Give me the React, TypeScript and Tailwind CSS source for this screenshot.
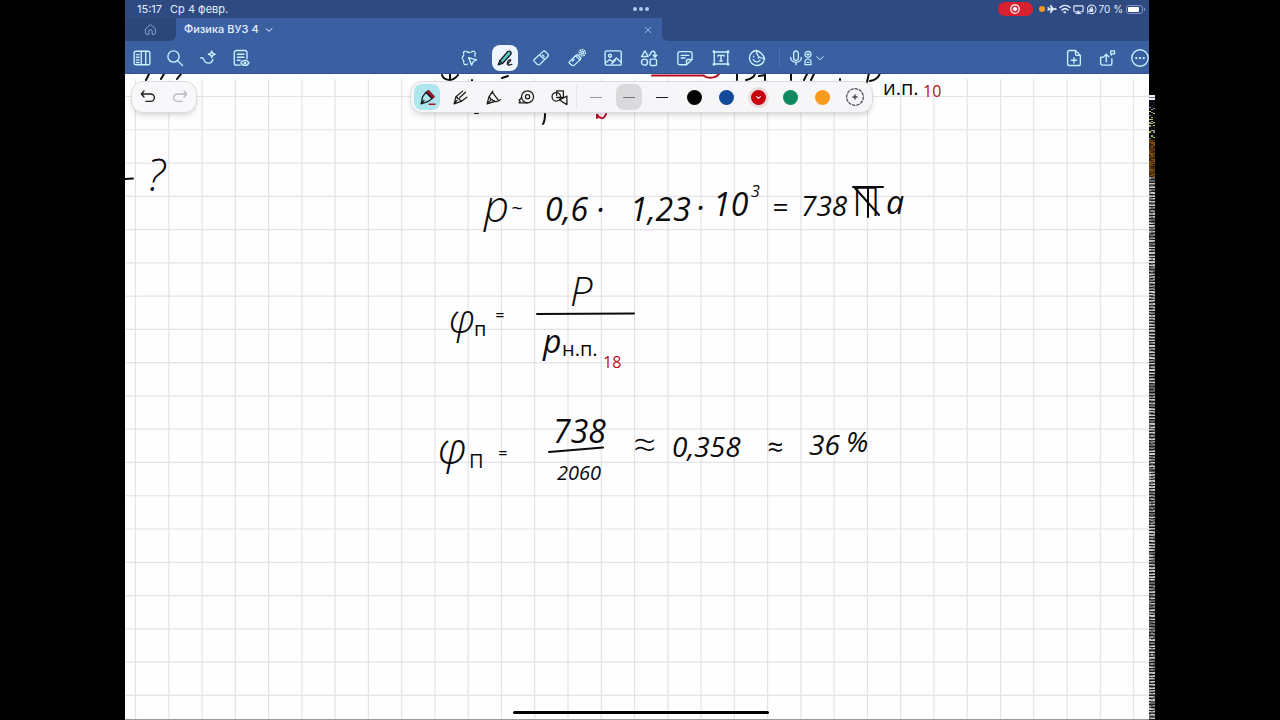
import type { ReactNode } from 'react'

const icon = {
  viewBox: '0 0 24 24',
  fill: 'none',
  stroke: 'currentColor',
  strokeWidth: 1.8,
  strokeLinecap: 'round',
  strokeLinejoin: 'round',
  'aria-hidden': true,
} as const

function Icon({ children, className = 'size-[18px]' }: { children: ReactNode; className?: string }) {
  return (
    <svg {...icon} className={`shrink-0 ${className}`}>
      {children}
    </svg>
  )
}

const leftTools = [
  {
    label: 'Боковая панель',
    art: (
      <>
        <rect x="1.500" y="3" width="21" height="18" rx="2.500" />
        <path d="M11 3v18M17 3v18M4.500 7.500H8M4.500 11H8M4.500 14.500H8M4.500 18H8" />
      </>
    ),
  },
  {
    label: 'Поиск',
    art: (
      <>
        <circle cx="10" cy="10" r="7.500" />
        <path d="M15.500 15.500l6.500 6.500" />
      </>
    ),
  },
  {
    label: 'Ассистент',
    art: (
      <>
        <path d="M2 12c2-1 3.500 0 4.500 2 2.500 7 10.500 6 12 0" />
        <path d="M17 2.500l1.200 3.300 3.300 1.200-3.300 1.200L17 11.500l-1.200-3.300L12.500 7l3.300-1.200z" />
      </>
    ),
  },
  {
    label: 'Режим чтения',
    art: (
      <>
        <path d="M11 21.500H6a3 3 0 0 1-3-3V5a3 3 0 0 1 3-3h11a3 3 0 0 1 3 3v8M7 7h9M7 11h9M7 15h4" />
        <path d="M12 18.500c2-4.500 8.500-4.500 10.500 0-2 4.500-8.500 4.500-10.500 0z" />
        <circle cx="17.300" cy="18.500" r="1" />
      </>
    ),
  },
]

const midTools = [
  {
    label: 'Лассо',
    art: (
      <>
        <path
          strokeDasharray="4.500 2"
          d="M10 20c-3 2-6 0-5-3 .5-2-2-3-2-5s2.500-3 2-5C4 3 7 2 9 3.500s5 1.500 7 0 5.500 0 4 3.500c-.5 1.500 0 2 .5 3"
        />
        <path d="M11.500 11.500l10.500 3-4.500 2.500-2 4.500z" />
      </>
    ),
  },
  {
    label: 'Перо',
    art: (
      <>
        <path fill="#58c4bb" d="M5 16L15.500 3.500c3-2 6 1 4 4L9 19l-6 2z" />
        <path d="M5 16l3.500 3M15 20c6-5 5-6 3-5.500-3 1-4 7-1 7 2 0 3-1.500 4-1" />
      </>
    ),
  },
  {
    label: 'Ластик',
    art: (
      <>
        <path d="M3 14L14.500 3.500c1-1 2.500-1 3.500 0l3 3c1 1 1 2.500 0 3.500L10.500 20.500c-1 1-2.500 1-3.500 0l-4-4c-.7-.7-.7-1.800 0-2.500zM10 8l7 6" />
        <path d="M14 8l2 2" />
      </>
    ),
  },
  {
    label: 'Маркер',
    art: (
      <>
        <path d="M2 17L10 9l6 5.500-7.500 7c-1 1-2.500 1-3.500 0l-3-2.500c-.6-.6-.6-1.400 0-2z" />
        <path d="M10 9l2.500-1.500 4.500 4.500-1 2.500M8 14l-2 2" />
        <circle cx="19" cy="5" r="1.800" />
        <path strokeDasharray="1 2.200" d="M19 .8a4.200 4.200 0 1 1 0 8.400 4.200 4.200 0 0 1 0-8.400" />
      </>
    ),
  },
  {
    label: 'Изображение',
    art: (
      <>
        <rect x="1.500" y="2.500" width="21.500" height="19" rx="2" />
        <circle cx="8" cy="9" r="2" />
        <path d="M2.500 18l5-4 4 3 5-5 5.500 5M10 20l5-5" />
      </>
    ),
  },
  {
    label: 'Элементы',
    art: (
      <>
        <path d="M6.500 2.500L11 10H2zM14 6c1-4 6-4 6 0v4M17.500 8l2.500 3 2.500-3M14 6l-1.500 2.500" />
        <circle cx="6" cy="17.500" r="4" />
        <rect x="13.500" y="13.500" width="8.500" height="8.500" rx="1.500" />
      </>
    ),
  },
  {
    label: 'Заметка',
    art: <path d="M14 21H5a2.500 2.500 0 0 1-2.500-2.500V6A2.500 2.500 0 0 1 5 3.500h14A2.500 2.500 0 0 1 21.500 6v8L14 21v-5a2 2 0 0 1 2-2h5.500M7 8.500h10M7 12h5" />,
  },
  {
    label: 'Текст',
    art: (
      <>
        <path d="M3 4h18v16H3z" />
        <path d="M8 9.500v-1h8v1M12 8.500V16M10.500 16h3" />
        <path strokeWidth={3.500} d="M2.500 3.500h.1M21.400 3.500h.1M2.500 20.500h.1M21.400 20.500h.1" />
      </>
    ),
  },
  {
    label: 'Стикер',
    art: (
      <>
        <path d="M11 2a10 10 0 1 0 11 11c-1-5-6-10-11-11z" />
        <path d="M11 2c1 5 1 10 11 11M7 14c2 4 7 4 9 1M7.500 9.500v.8M14 12v.3" />
      </>
    ),
  },
]

const pens = [
  {
    label: 'Перьевая ручка',
    art: (
      <>
        <path fill="#a5162c" stroke="#7d1427" d="M10 4.500l3.500-2.500 8 9-3 2.500z" />
        <path d="M10 4.500l8.500 9-5.500 4L3 21l2-10zM3 21l4-5" />
        <path stroke="#a5162c" strokeWidth={2.200} d="M14.500 21.500h8" />
      </>
    ),
  },
  {
    label: 'Шариковая ручка',
    art: <path d="M15 3L5.500 11 3 21l10-3.500 8-6M3 21l4-5M5.500 11c1.500 0 2.500 1 2.300 2.500 2-.3 3 .5 2.700 2 1.500 0 2.500.5 2.500 2M11 12l8-7.500" />,
  },
  {
    label: 'Кисть',
    art: <path d="M11 3l-5.500 8L3 21l11-3.500M10 4l9 12M14 17.500c3 1 5 0 8-2.500M3 21l5-5M5.500 11c2 .5 2.500 2 2 3.500 2-.2 3.500.5 3.500 2 1.500-.3 2.500 0 3 1" />,
  },
  {
    label: 'Лента',
    art: (
      <>
        <circle cx="13.500" cy="11" r="8.500" />
        <circle cx="13.500" cy="11" r="3" />
        <path d="M13.500 19.500H1.500l1.500-2-1.500-2 2-1.500 1.500-2" />
      </>
    ),
  },
  {
    label: 'Фигуры',
    art: (
      <>
        <circle cx="7.500" cy="11" r="6" />
        <path d="M8 9V2.500h9.500V12H8M12 15.500L22.500 10v12z" />
      </>
    ),
  },
]

const swatches = [
  { label: 'Чёрный', className: 'bg-black' },
  { label: 'Синий', className: 'bg-[#104a98]' },
  { label: 'Красный', className: 'bg-[#c8000d]', active: true },
  { label: 'Зелёный', className: 'bg-[#0f8a60]' },
  { label: 'Оранжевый', className: 'bg-[#f79a1e]' },
]

const widths = [
  { label: 'Тонкая линия', className: 'h-px w-3 bg-[#9b9ba0]' },
  { label: 'Средняя линия', className: 'h-px w-3 bg-[#77777c]', active: true },
  { label: 'Толстая линия', className: 'h-px w-3 bg-[#1c1c1e]' },
]

type Note = [x: number, baseline: number, size: number, text: string]

// handwriting on the page: slanted strokes, then the upright subscripts and units
const slanted: Note[] = [
  [147, 191, 44, '?'],
  [484, 222, 44, 'р'],
  [511, 215, 20, '~'],
  [545, 221, 32, '0,6'],
  [596, 221, 32, '·'],
  [630, 221, 32, '1,23'],
  [696, 219, 32, '·'],
  [713, 216, 32, '10'],
  [751, 197, 16, '3'],
  [772, 217, 28, '='],
  [801, 216, 28, '738'],
  [886, 214, 32, 'а'],
  [449, 333, 40, 'φ'],
  [495, 321, 16, '='],
  [570, 306, 40, 'Р'],
  [543, 353, 32, 'р'],
  [438, 464, 44, 'φ'],
  [498, 459, 16, '='],
  [553, 443, 32, '738'],
  [557, 480, 20, '2060'],
  [633, 459, 40, '≈'],
  [672, 457, 28, '0,358'],
  [767, 457, 28, '≈'],
  [809, 455, 28, '36'],
  [846, 452, 28, '%'],
]

const upright: Note[] = [
  [883, 95, 20, 'и.п.'],
  [852, 216, 40, 'П'],
  [474, 336, 20, 'п'],
  [562, 356, 20, 'н.п.'],
  [469, 468, 20, 'П'],
]

const red: Note[] = [
  [923, 97, 16, '10'],
  [603, 368, 16, '18'],
]

function Notes({ items }: { items: Note[] }) {
  return items.map(([x, y, size, text]) => (
    <text key={`${x}-${y}`} x={x} y={y} fontSize={size} className={size < 40 ? 'font-normal' : 'font-light'}>
      {text}
    </text>
  ))
}

const STEP = 33.27
const columns = Array.from({ length: 31 }, (_, i) => 135.5 + i * STEP)
const rows = Array.from({ length: 19 }, (_, i) => 96.5 + i * STEP)

function Page() {
  return (
    <svg
      className="absolute inset-0 size-full font-['Open_Sans','Noto_Sans',sans-serif]"
      role="img"
      aria-label="Страница тетради"
    >
      <g transform="translate(-125 -74)">
        <g stroke="#e3e3e8" strokeWidth="1.200">
          {columns.map((x) => (
            <line key={x} x1={x} x2={x} y1="79" y2="720" />
          ))}
          {rows.map((y) => (
            <line key={y} x1="125" x2="1149" y1={y} y2={y} />
          ))}
        </g>
        <g fill="none" stroke="#0b0b0d" strokeWidth="2" strokeLinecap="round">
          <path d="M125 179l8-.5M149 74l-3 6M164 74l-3 5M181 74l-4 5" />
          <path d="M442 75c2 6 11 7 16 0M450 79v-5M502 78l6-2M472 80v1M475 113h3" />
          <path d="M737 74v6M746 80c5-1 8-3 9-6M759 76l6-1v5M791 74v6M804 80l3-6M811 80l3-6M840 79v1" />
          <path d="M869 73l-2 9M870 81c6-1 9-4 10-8M545 114c0 4 0 7-2 10" />
          <path d="M537 314l97-.500M549 452l54-4.500" />
          <path d="M853 187h30M855 188l24 27M868 189v28" />
        </g>
        <g fill="none" stroke="#b80f20" strokeWidth="2" strokeLinecap="round">
          <path d="M652 75.500h52M704 76c5 3 12 2 15-2M597 118v-4c2 5 7 6 9 0" />
        </g>
        <g className="italic" fill="#0b0b0d">
          <Notes items={slanted} />
        </g>
        <g fill="#0b0b0d">
          <Notes items={upright} />
        </g>
        <g fill="#b80f20">
          <Notes items={red} />
        </g>
      </g>
    </svg>
  )
}

// striped noise running down the right edge of the screen
function edgeColor(i: number, j: number) {
  const h = Math.abs(Math.sin(i * 12.9898 + j * 78.233) * 43758.5453) % 1
  const row = Math.abs(Math.sin(i * 4.137) * 9631.37) % 1
  if (i < 5) return i === 2 ? '#6f6a80' : '#f0eef6'
  if (i < 45) return h > 0.85 ? '#c3c45e' : h > 0.7 ? '#8a8f9c' : '#0c0c10'
  if (i < 82) return h > 0.5 ? '#7c4a12' : '#3b2410'
  if (i % 3 === 0) return h > 0.8 ? '#4c4c4c' : '#1b1b1b'
  if (row > 0.6) return h > 0.75 ? '#8c8c8c' : '#c9c9c9'
  return h > 0.7 ? '#9d9d9d' : '#626262'
}

function EdgeNoise() {
  return (
    <div className="w-[6px] shrink-0 overflow-hidden pt-[95px]">
      <svg className="h-[625px] w-full" aria-hidden="true" shapeRendering="crispEdges">
        {Array.from({ length: 625 }, (_, i) =>
          [0, 1, 2].map((j) => (
            <rect key={`${i}-${j}`} x={j * 2} y={i} width="2" height="1" fill={edgeColor(i, j)} />
          )),
        )}
      </svg>
    </div>
  )
}

function StatusBar() {
  return (
    <div className="grid h-[18px] grid-cols-3 items-center pr-1 pl-3 text-[11px] leading-[18px] text-[#e4edfb]">
      <div className="flex gap-2">
        <span>15:17</span>
        <span>Ср 4 февр.</span>
      </div>
      <div className="flex justify-center gap-[2px]">
        <i className="size-1 rounded-full bg-[#b3c9f0]" />
        <i className="size-1 rounded-full bg-[#b3c9f0]" />
        <i className="size-1 rounded-full bg-[#b3c9f0]" />
      </div>
      <div className="flex items-center justify-end gap-[2px]">
        <span className="mr-1 flex h-[14px] w-[35px] items-center justify-center rounded-full bg-[#d9202f] text-white">
          <Icon className="size-3">
            <circle cx="12" cy="12" r="8.500" strokeWidth={2.500} />
            <circle cx="12" cy="12" r="3.500" fill="currentColor" />
          </Icon>
        </span>
        <i className="size-[6px] rounded-full bg-[#f29a1f]" />
        <Icon className="size-[10px]">
          <path fill="currentColor" d="M22 12c0-1-1-1.500-2-1.500h-5L9.500 3H8l2 7.500H5L3 8H2l1 4-1 4h1l2-2.500h5L8 21h1.500l5.500-7.500h5c1 0 2-.5 2-1.500z" />
        </Icon>
        <Icon className="size-3">
          <path strokeWidth={3.200} d="M2 9c6-5.500 14-5.500 20 0M6 14c4-3.500 8-3.500 12 0" />
          <path fill="currentColor" d="M10 18l2 2.500 2-2.500c-1-1-3-1-4 0z" />
        </Icon>
        <Icon className="size-[11px]">
          <path strokeWidth={2.500} d="M7 17H4a2 2 0 0 1-2-2V6a2 2 0 0 1 2-2h16a2 2 0 0 1 2 2v9a2 2 0 0 1-2 2h-3" />
          <path fill="currentColor" d="M12 15l5 6H7z" />
        </Icon>
        <Icon className="size-[11px]">
          <path strokeWidth={2.200} d="M4 16a9.500 9.500 0 1 1 4 4M4 20v-4h4" />
          <rect x="9" y="11" width="6" height="5" fill="currentColor" />
          <path d="M10 11V8.500a2 2 0 0 1 4 0V11" />
        </Icon>
        <span className="text-[10px]">70 %</span>
        <span className="ml-px flex items-center gap-px">
          <span className="flex h-[9px] w-[17px] rounded-[3px] border border-[#7c93bf] p-px">
            <i className="w-[11px] rounded-[1px] bg-white" />
          </span>
          <i className="h-[3px] w-px bg-[#7c93bf]" />
        </span>
      </div>
    </div>
  )
}

function Tabs() {
  return (
    <div className="flex h-[23px] bg-[#3b60a2]">
      <a href="#home" aria-label="Главная" className="flex w-[51px] items-center justify-center rounded-br-md bg-[#2d467a] text-[#8ba5d6]">
        <Icon className="size-[13px]">
          <path d="M3 10.500L12 3l9 7.500V19a2 2 0 0 1-2 2h-4v-6a3 3 0 0 0-6 0v6H5a2 2 0 0 1-2-2z" />
        </Icon>
      </a>
      <div className="flex w-[486px] items-center justify-between rounded-t-md bg-[#3b60a2] pr-[10px] pl-2">
        <button className="flex items-center gap-[6px] text-[11px] font-medium text-[#e4effd]">
          Физика ВУЗ 4
          <Icon className="size-2">
            <path strokeWidth={3} d="M3 8l9 8 9-8" />
          </Icon>
        </button>
        <button aria-label="Закрыть вкладку" className="text-[#a9c3ee]">
          <Icon className="size-2">
            <path strokeWidth={2.500} d="M4 4l16 16M20 4L4 20" />
          </Icon>
        </button>
      </div>
      <div className="flex-1 rounded-bl-md bg-[#2f4a80]" />
    </div>
  )
}

function Toolbar() {
  return (
    <div className="grid h-[33px] grid-cols-[1fr_auto_1fr] items-center border-b border-[#2f5192] bg-[#3b60a2] pt-px text-[#c9f0ff]">
      <div className="flex">
        {leftTools.map((tool) => (
          <button key={tool.label} aria-label={tool.label} className="flex w-[33px] justify-center">
            <Icon>{tool.art}</Icon>
          </button>
        ))}
      </div>
      <div className="flex items-center">
        {midTools.map((tool) => (
          <button key={tool.label} aria-label={tool.label} className="flex w-9 justify-center">
            {tool.label === 'Перо' ? (
              <span className="flex size-[26px] items-center justify-center rounded-lg bg-[#eff5ff] text-[#16202c]">
                <Icon>{tool.art}</Icon>
              </span>
            ) : (
              <Icon>{tool.art}</Icon>
            )}
          </button>
        ))}
        <i className="mr-2 ml-1 h-5 w-px bg-[#4d72b3]" />
        <button aria-label="Запись" className="flex items-center">
          <Icon className="size-4">
            <path strokeWidth={2} d="M8.500 5a3.500 3.500 0 0 1 7 0v7a3.500 3.500 0 0 1-7 0zM4 11c0 10 16 10 16 0M12 18.500V22" />
          </Icon>
          <Icon className="-ml-1 size-4">
            <circle cx="12" cy="6.500" r="4.500" />
            <path d="M12 4.800v3.400M10.300 6.500h3.400M7.500 22v-4a4.500 4.500 0 0 1 9 0v4zM10.500 18.500h3" />
          </Icon>
          <Icon className="size-2">
            <path strokeWidth={2.800} d="M2 8l10 9L22 8" />
          </Icon>
        </button>
      </div>
      <div className="flex justify-end gap-[15px]">
        <button aria-label="Добавить страницу">
          <Icon>
            <path d="M14 2H6a2.500 2.500 0 0 0-2.500 2.500v15A2.500 2.500 0 0 0 6 22h12a2.500 2.500 0 0 0 2.500-2.500V8.500zM14 2v4.500a2 2 0 0 0 2 2h4.500M12 11.500v7M8.500 15h7" />
          </Icon>
        </button>
        <button aria-label="Поделиться">
          <Icon>
            <path d="M6 11H3.500v8A2.500 2.500 0 0 0 6 21.500h10a2.500 2.500 0 0 0 2.500-2.500v-6M11 17V7M7.500 10.500L11 7l3.500 3.500" />
            <path d="M17 2.500h5v4h-3l-1.500 1.500L17 6.500z" />
          </Icon>
        </button>
        <button aria-label="Ещё">
          <Icon>
            <circle cx="12" cy="12" r="11" />
            <path strokeWidth={3} d="M7 12h.1M12 12h.1M17 12h.1" />
          </Icon>
        </button>
      </div>
    </div>
  )
}

function History() {
  return (
    <div className="absolute top-[7px] left-[6px] flex h-8 items-center rounded-xl border border-[#dcdce0] bg-[#f8f8fa] shadow-md">
      <button aria-label="Отменить" className="flex w-8 justify-center text-[#1c1c1e]">
        <Icon className="size-4">
          <path strokeWidth={2} d="M6 3L2 7.500 6 12M2 7.500h14a5.500 5.500 0 0 1 0 11H9" />
        </Icon>
      </button>
      <button aria-label="Повторить" className="flex w-8 justify-center text-[#b9b9be]">
        <Icon className="size-4">
          <path strokeWidth={2} d="M18 3l4 4.500-4 4.500M22 7.500H8a5.500 5.500 0 0 0 0 11h7" />
        </Icon>
      </button>
    </div>
  )
}

function PenOptions() {
  return (
    <div className="absolute inset-x-0 top-[7px] flex justify-center pl-2">
      <div className="flex h-8 items-center rounded-xl border border-[#dcdce0] bg-[#f6f6f8] shadow-md">
        {pens.map((pen, i) => (
          <button key={pen.label} aria-label={pen.label} className="flex w-[33px] justify-center text-[#1c1c1e]">
            <span className={i === 0 ? 'flex size-[26px] items-center justify-center rounded-lg bg-[#aee6ee]' : 'flex size-[26px] items-center justify-center'}>
              <Icon className="size-[17px]">{pen.art}</Icon>
            </span>
          </button>
        ))}
        <i className="mr-[3px] h-6 w-px bg-[#e6e6ea]" />
        {widths.map((line) => (
          <button key={line.label} aria-label={line.label} className="flex w-[33px] justify-center">
            <span className={line.active ? 'flex size-[26px] items-center justify-center rounded-lg bg-[#dadadd]' : 'flex size-[26px] items-center justify-center'}>
              <i className={line.className} />
            </span>
          </button>
        ))}
        {swatches.map((swatch) => (
          <button key={swatch.label} aria-label={swatch.label} className="flex w-8 justify-center">
            <span className={swatch.active ? 'rounded-full bg-[#e9dddf] p-[3px]' : 'p-[3px]'}>
              <span className={`flex size-[15px] items-center justify-center rounded-full text-white ${swatch.className}`}>
                {swatch.active && (
                  <Icon className="size-[5px]">
                    <path strokeWidth={5} d="M3 8l9 8 9-8" />
                  </Icon>
                )}
              </span>
            </span>
          </button>
        ))}
        <button aria-label="Добавить цвет" className="flex w-[33px] justify-center text-[#4a4a4e]">
          <Icon className="size-5">
            <circle cx="12" cy="12" r="10" strokeWidth={1.500} strokeDasharray="3 2.200" />
            <path d="M12 9.500v5M9.500 12h5" />
          </Icon>
        </button>
      </div>
    </div>
  )
}

export default function App() {
  return (
    <div className="flex min-h-screen bg-black px-[125px] font-['Inter','Liberation_Sans',sans-serif]">
      <div className="flex min-w-0 flex-1 flex-col">
        <header className="bg-[#2f4a80]">
          <StatusBar />
          <Tabs />
          <Toolbar />
        </header>
        <main className="relative flex flex-1 flex-col justify-end overflow-hidden border-b border-[#9b9b9f] bg-[#fefefe]">
          <Page />
          <History />
          <PenOptions />
          <div className="relative mb-[5px] ml-2 h-[3px] w-1/4 self-center rounded-full bg-black" />
        </main>
      </div>
      <EdgeNoise />
    </div>
  )
}
